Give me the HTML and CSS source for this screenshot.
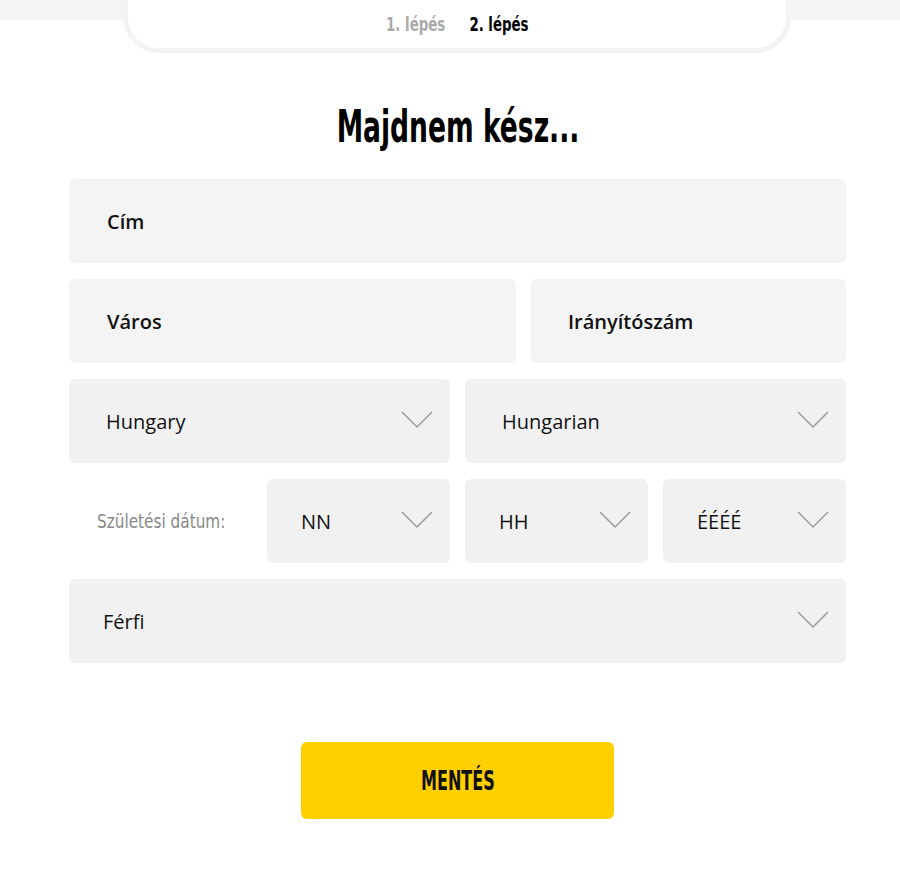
FILE: index.html
```html
<!DOCTYPE html>
<html lang="hu">
<head>
<meta charset="UTF-8" />
<meta name="viewport" content="width=device-width, initial-scale=1" />
<title>Regisztráció - 2. lépés</title>
<link rel="stylesheet" href="styles.css">
</head>
<body>
<div class="topbar">
  <div class="steps">
    <span class="steps-inner">
      <span class="step done">1. lépés</span>
      <span class="step active">2. lépés</span>
    </span>
  </div>
</div>

<div class="container">
  <h1><span class="narrow">Majdnem kész...</span></h1>

  <form class="form">
    <div class="field full"><span class="label">Cím</span></div>

    <div class="row row-city">
      <div class="field"><span class="label">Város</span></div>
      <div class="field"><span class="label">Irányítószám</span></div>
    </div>

    <div class="row row-two">
      <div class="field select">
        <span class="value">Hungary</span>
        <svg class="chev" width="32" height="18" viewBox="0 0 32 18"><polyline points="1,1 16,16 31,1" /></svg>
      </div>
      <div class="field select">
        <span class="value">Hungarian</span>
        <svg class="chev" width="32" height="18" viewBox="0 0 32 18"><polyline points="1,1 16,16 31,1" /></svg>
      </div>
    </div>

    <div class="row row-date">
      <div class="date-label"><span class="narrow">Születési dátum:</span></div>
      <div class="field select small">
        <span class="value">NN</span>
        <svg class="chev" width="32" height="18" viewBox="0 0 32 18"><polyline points="1,1 16,16 31,1" /></svg>
      </div>
      <div class="field select small">
        <span class="value">HH</span>
        <svg class="chev" width="32" height="18" viewBox="0 0 32 18"><polyline points="1,1 16,16 31,1" /></svg>
      </div>
      <div class="field select small">
        <span class="value">ÉÉÉÉ</span>
        <svg class="chev" width="32" height="18" viewBox="0 0 32 18"><polyline points="1,1 16,16 31,1" /></svg>
      </div>
    </div>

    <div class="field select full gender">
      <span class="value">Férfi</span>
      <svg class="chev" width="32" height="18" viewBox="0 0 32 18"><polyline points="1,1 16,16 31,1" /></svg>
    </div>

    <div class="actions">
      <button type="button" class="save"><span class="narrow">MENTÉS</span></button>
    </div>
  </form>
</div>
</body>
</html>
```

FILE: styles.css
```css
body {
  margin: 0;
  font-family: 'Open Sans', 'Noto Sans', sans-serif;
  color: #111;
  background: #fff;
}
.narrow {
  display: inline-block;
  transform-origin: center;
}
.topbar {
  height: 20px;
  background: #f4f4f4;
  display: flex;
  justify-content: center;
  padding-left: 14px;
}
.steps {
  width: 658px;
  height: 38px;
  margin-top: -50px;
  padding: 50px 0 5px;
  background: #fff;
  border: 5px solid #f3f3f3;
  border-radius: 0 0 36px 36px;
  display: flex;
  justify-content: center;
  align-items: center;
  flex-shrink: 0;
}
.steps-inner {
  display: inline-flex;
  gap: 31px;
  transform: scaleX(0.78);
  font-family: 'DejaVu Sans Condensed', sans-serif;
  font-weight: bold;
  font-size: 19px;
}
.step.done {
  color: #aaa;
}
.step.active {
  color: #000;
}
.container {
  width: 777px;
  margin-left: 69px;
}
h1 {
  margin: 82px 0 27px;
  text-align: center;
  font-family: 'DejaVu Sans Condensed', sans-serif;
  font-size: 45px;
  line-height: 50px;
  font-weight: bold;
  color: #000;
}
h1 .narrow {
  transform: scaleX(0.656);
}
.form {
  display: flex;
  flex-direction: column;
  gap: 16px;
}
.row {
  display: flex;
  gap: 15px;
}
.field {
  height: 84px;
  background: #f4f4f4;
  border-radius: 6px;
  display: flex;
  align-items: center;
  padding: 0 17px 0 38px;
  box-sizing: border-box;
  font-size: 20px;
}
.label {
  font-weight: 600;
}
.row-city .field:first-child {
  width: 447px;
}
.row-city .field:last-child {
  flex: 1;
  padding-left: 37px;
}
.row-two .field {
  flex: 1;
  padding-left: 37px;
}
.select {
  background: #f1f1f1;
  justify-content: space-between;
}
.chev {
  fill: none;
  stroke: #9c9c9c;
  stroke-width: 1.5;
  margin-top: -2px;
}
.row-date {
  align-items: center;
}
.date-label {
  width: 183px;
  padding-left: 28px;
  box-sizing: border-box;
  font-family: 'DejaVu Sans Condensed', sans-serif;
  font-size: 20px;
  color: #888;
}
.date-label .narrow {
  transform: scaleX(0.85);
  transform-origin: left center;
}
.small {
  flex: 1;
  padding-left: 34px;
}
.gender {
  padding-left: 34px;
}
.actions {
  display: flex;
  justify-content: center;
  margin-top: 63px;
}
.save {
  width: 313px;
  height: 77px;
  border: none;
  border-radius: 6px;
  background: #ffcf00;
  font-family: 'DejaVu Sans Condensed', sans-serif;
  font-weight: bold;
  font-size: 27px;
  color: #111;
  cursor: pointer;
}
.save .narrow {
  transform: scaleX(0.66);
}
```
